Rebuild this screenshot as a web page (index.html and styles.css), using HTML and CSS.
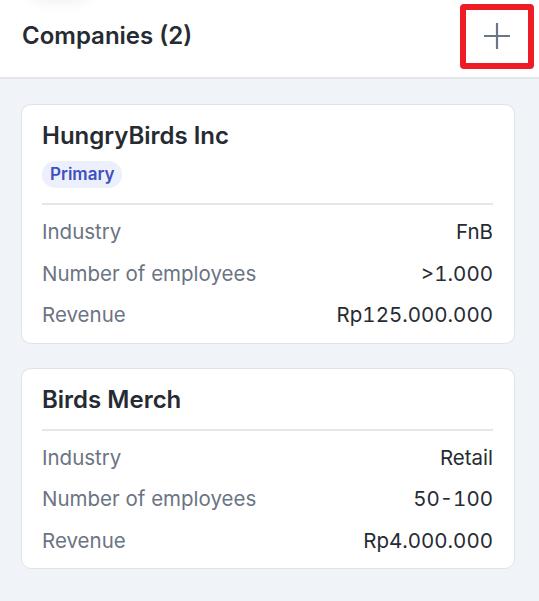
FILE: index.html
```html
<!DOCTYPE html>
<html>
<head>
    <meta http-equiv="Content-Type" content="text/html; charset=utf-8" />
    <link rel="stylesheet" href="styles.css">
    <title>Companies</title>
</head>
<body>
<div class="header">
    <h1 class="title">Companies (2)</h1>
    <a class="add-btn">
        <svg width="28" height="28" viewBox="0 0 28 28">
            <path d="M14 1v26M1 14h26" stroke="#6b7684" stroke-width="2.2" fill="none"/>
        </svg>
    </a>
</div>
<div class="list">
    <div class="card">
        <div class="card-head">
            <h2 class="name">HungryBirds Inc</h2>
            <span class="badge">Primary</span>
        </div>
        <ul class="info">
            <li><span class="label">Industry</span><span class="value">FnB</span></li>
            <li><span class="label">Number of employees</span><span class="value">&gt;1.000</span></li>
            <li><span class="label">Revenue</span><span class="value">Rp125.000.000</span></li>
        </ul>
    </div>
    <div class="card">
        <div class="card-head">
            <h2 class="name">Birds Merch</h2>
        </div>
        <ul class="info">
            <li><span class="label">Industry</span><span class="value">Retail</span></li>
            <li><span class="label">Number of employees</span><span class="value">50-100</span></li>
            <li><span class="label">Revenue</span><span class="value">Rp4.000.000</span></li>
        </ul>
    </div>
</div>
</body>
</html>
```

FILE: styles.css
```css
body {
    margin: 0;
    background: #f0f3f8;
    font-family: Inter, "Noto Sans", sans-serif;
    color: #262b33;
}
.header {
    position: relative;
    height: 77px;
    background: #fff;
    border-bottom: 2px solid #e3e6eb;
    display: flex;
    align-items: center;
    justify-content: space-between;
    padding: 0 5px 0 22px;
}
.header::before {
    content: "";
    position: absolute;
    left: 30px;
    top: -14px;
    width: 60px;
    height: 18px;
    border-radius: 50%;
    background: rgba(0, 0, 0, 0.05);
    filter: blur(6px);
}
.title {
    margin: -6px 0 0;
    font-size: 24px;
    font-weight: 600;
    color: #262b33;
}
.add-btn {
    width: 62px;
    height: 53px;
    border: 6px solid #ee1c25;
    border-radius: 4px;
    display: flex;
    align-items: center;
    justify-content: center;
    margin-top: -5px;
}
.add-btn svg {
    display: block;
}
.list {
    padding: 25px 24px 0 21px;
    display: flex;
    flex-direction: column;
    gap: 24px;
}
.card {
    background: #fff;
    border: 1px solid #dfe2e7;
    border-radius: 10px;
    padding: 17px 21px 7px 20px;
}
.card-head {
    padding-bottom: 15px;
    border-bottom: 2px solid #e3e6ea;
}
.name {
    margin: 0;
    font-size: 24px;
    line-height: 28px;
    font-weight: 600;
    color: #262b33;
}
.badge {
    display: inline-block;
    margin-top: 11px;
    padding: 0 8px;
    height: 27px;
    line-height: 27px;
    border-radius: 14px;
    background: #eceffc;
    color: #3e4fc0;
    font-size: 17px;
    font-weight: 600;
}
.info {
    list-style: none;
    margin: 0;
    padding: 6px 0 0;
}
.info li {
    display: flex;
    justify-content: space-between;
    height: 41.5px;
    line-height: 41.5px;
    font-size: 20.5px;
}
.label {
    color: #6b7483;
}
.value {
    color: #262b33;
    font-variant-numeric: tabular-nums;
}
```
